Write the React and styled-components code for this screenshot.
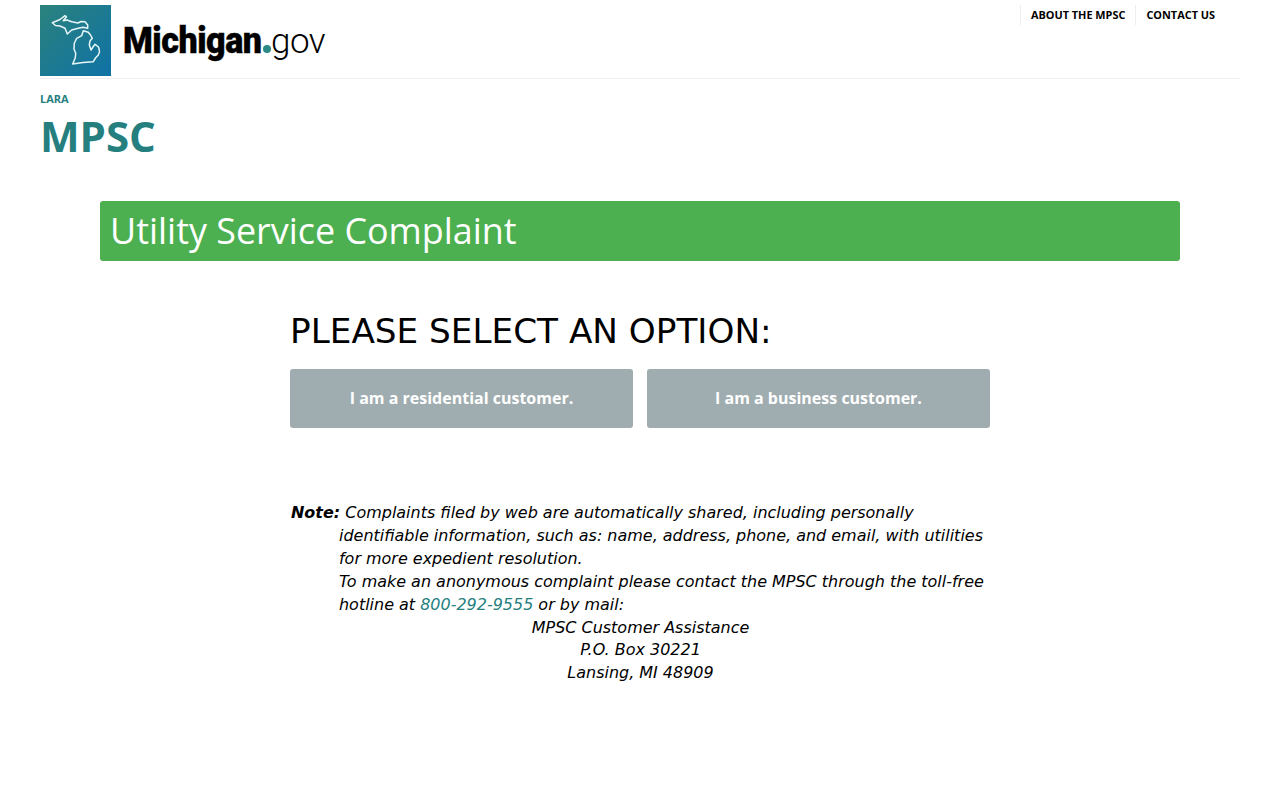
import React from "react";
import styled, { createGlobalStyle } from "styled-components";

const GlobalStyle = createGlobalStyle`
  html, body {
    margin: 0;
    padding: 0;
    background: #fff;
    font-family: "Open Sans", sans-serif;
  }
`;

const Page = styled.div`
  width: 1280px;
  min-height: 800px;
  box-sizing: border-box;
  padding: 0 40px;
`;

const Header = styled.header`
  display: flex;
  justify-content: space-between;
  align-items: flex-start;
  height: 73px;
  padding-top: 5px;
  border-bottom: 1px solid #eeeeee;
`;

const LogoLink = styled.a`
  display: flex;
  align-items: center;
  gap: 12px;
  text-decoration: none;
  color: #000;
`;

const LogoTile = styled.svg`
  display: block;
  width: 71px;
  height: 71px;
`;

const Wordmark = styled.span`
  display: flex;
  align-items: baseline;
  width: 204px;
  white-space: nowrap;
`;

const WordBold = styled.span`
  display: inline-block;
  width: 140px;
  font-family: Roboto, sans-serif;
  font-weight: 900;
  font-size: 36px;
  letter-spacing: -0.5px;
  -webkit-text-stroke: 0.4px #000;
  transform: scaleX(0.945);
  transform-origin: left center;
`;

const WordDot = styled.span`
  display: inline-block;
  flex: none;
  width: 8px;
  height: 8px;
  border-radius: 50%;
  background: #2c8a86;
  margin-right: 0;
`;

const WordLight = styled.span`
  font-family: Roboto, sans-serif;
  font-weight: 300;
  font-size: 35px;
  letter-spacing: -0.5px;
`;

const TopNav = styled.nav`
  display: flex;
  margin-right: 15px;
`;

const TopNavLink = styled.a`
  display: block;
  padding: 0 10px;
  border-left: 1px solid #eeeeee;
  font-size: 10.9px;
  font-weight: 700;
  line-height: 20px;
  color: #000;
  text-decoration: none;
  text-transform: uppercase;
`;

const Department = styled.div`
  margin-top: 12px;
  font-size: 11px;
  font-weight: 700;
  line-height: 16px;
  color: #267f7f;
`;

const SiteTitle = styled.h1`
  margin: 0;
  font-size: 42px;
  font-weight: 700;
  line-height: 58px;
  color: #267f7f;
`;

const Banner = styled.div`
  margin: 36px 60px 0;
  height: 60px;
  padding: 0 10px;
  border-radius: 3px;
  background: #4caf50;
  color: #fff;
  font-size: 35.9px;
  line-height: 60px;
`;

const Content = styled.main`
  width: 700px;
  margin: 47px auto 0;
`;

const Prompt = styled.h2`
  margin: 0;
  font-family: "DejaVu Sans", sans-serif;
  font-size: 34.25px;
  font-weight: 400;
  line-height: 46px;
  color: #000;
`;

const Options = styled.div`
  display: grid;
  grid-template-columns: 1fr 1fr;
  gap: 14px;
  margin-top: 15px;
`;

const OptionButton = styled.button`
  height: 59px;
  padding: 0 0 2px;
  border: 0;
  border-radius: 3px;
  background: #a0adb0;
  color: #fff;
  font-family: "Open Sans", sans-serif;
  font-size: 16px;
  font-weight: 700;
  cursor: pointer;
`;

const NoteBlock = styled.div`
  margin-top: 74.3px;
  padding-left: 1px;
  font-family: "DejaVu Sans", sans-serif;
  font-size: 15.97px;
  font-style: italic;
  line-height: 22.857px;
  color: #000;
`;

const NoteText = styled.p`
  margin: 0;
  padding-left: 48px;
  text-indent: -48px;
`;

const Phone = styled.a`
  color: #267f7f;
  text-decoration: none;
`;

const Address = styled.address`
  text-align: center;
`;

export default function App() {
  return (
    <>
      <GlobalStyle />
      <Page>
        <Header>
          <LogoLink href="#">
            <LogoTile viewBox="0 0 71 71" aria-hidden="true">
              <defs>
                <linearGradient id="tile" x1="0" y1="0" x2="1" y2="1">
                  <stop offset="0" stopColor="#2b827c" />
                  <stop offset="1" stopColor="#0f72a6" />
                </linearGradient>
              </defs>
              <rect width="71" height="71" fill="url(#tile)" />
              <g fill="none" stroke="#e6f6f8" strokeWidth="1.5" strokeLinejoin="round">
                <path d="M12.3 17.7 L20 14.5 L25 10.7 L26.5 11.8 L23.3 15.7 L27 15 L31.7 16.7 L38 18 L41 16.5 L45 16.7 L47.7 20 L47.7 23.3 L43 22.2 L38.3 23.3 L31.7 25 L27.3 29 L25 23.3 L20 21 L15.5 20.5 Z" />
                <path d="M43.3 25.7 L48.3 27.3 L50.5 30 L52.3 33.3 L50 36 L49.3 40 L51 45 L53 42 L55 39.3 L58 41.5 L59 43.3 L59.5 47 L58.3 50 L55.5 53 L53.3 56.7 L43 57.5 L32.7 59 L35.2 53 L35.7 48.3 L34 44 L34.3 38.3 L36.7 33.3 L41.7 30.7 Z" />
              </g>
            </LogoTile>
            <Wordmark>
              <WordBold>Michigan</WordBold>
              <WordDot />
              <WordLight>gov</WordLight>
            </Wordmark>
          </LogoLink>
          <TopNav>
            <TopNavLink href="#">About the MPSC</TopNavLink>
            <TopNavLink href="#">Contact Us</TopNavLink>
          </TopNav>
        </Header>
        <Department>LARA</Department>
        <SiteTitle>MPSC</SiteTitle>
        <Banner>Utility Service Complaint</Banner>
        <Content>
          <Prompt>PLEASE SELECT AN OPTION:</Prompt>
          <Options>
            <OptionButton>I am a residential customer.</OptionButton>
            <OptionButton>I am a business customer.</OptionButton>
          </Options>
          <NoteBlock>
            <NoteText>
              <b>Note:</b> Complaints filed by web are automatically shared, including personally identifiable information, such as: name, address, phone, and email, with utilities for more expedient resolution.
              <br />
              To make an anonymous complaint please contact the MPSC through the toll-free hotline at{" "}
              <Phone href="#">800-292-9555</Phone> or by mail:
            </NoteText>
            <Address>
              MPSC Customer Assistance
              <br />
              P.O. Box 30221
              <br />
              Lansing, MI 48909
            </Address>
          </NoteBlock>
        </Content>
      </Page>
    </>
  );
}
